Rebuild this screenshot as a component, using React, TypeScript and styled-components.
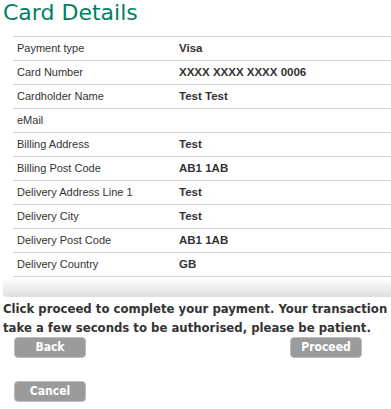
import React from "react";
import styled, { createGlobalStyle } from "styled-components";

const Global = createGlobalStyle`
  html, body { margin: 0; padding: 0; background: #ffffff; }
  body { overflow: hidden; }
`;

const Page = styled.div`
  width: 391px;
  padding: 0 0 0 3px;
  box-sizing: border-box;
  overflow: hidden;
`;

const Title = styled.h1`
  margin: 0;
  font-family: Verdana, "DejaVu Sans", sans-serif;
  font-weight: normal;
  font-size: 22px;
  line-height: 26px;
  color: #007f66;
`;

const Table = styled.div`
  margin: 10px 0 0 10px;
  border-top: 1px solid #d3d3d3;
  width: 400px;
`;

const Row = styled.div`
  display: grid;
  grid-template-columns: 166px 1fr;
  height: 23px;
  line-height: 22px;
  border-bottom: 1px solid #d3d3d3;
  font-family: Arial, "Liberation Sans", sans-serif;
  font-size: 11px;
  color: #333333;
`;

const Label = styled.div`
  padding-left: 4px;
`;

const Value = styled.div`
  font-weight: bold;
  font-size: 11.5px;
`;

const Footer = styled.div`
  height: 19px;
  margin-top: 1px;
  border-radius: 4px 0 0 4px;
  background: linear-gradient(to bottom, #ffffff 0%, #f2f2f2 40%, #dedede 100%);
`;

const Notice = styled.p`
  margin: 2px 0 0 0;
  font-family: Tahoma, "DejaVu Sans Condensed", "DejaVu Sans", sans-serif;
  font-weight: bold;
  font-size: 13px;
  line-height: 19px;
  color: #333333;
`;

const ButtonRow = styled.div`
  display: flex;
  justify-content: space-between;
  padding: 0 29px 0 11px;
`;

const CancelRow = styled.div`
  padding-left: 11px;
  margin-top: 23px;
`;

const Button = styled.button`
  width: 72px;
  height: 21px;
  padding: 0;
  border: 1px solid #bdbdbd;
  border-radius: 4px;
  background: #9b9b9b;
  color: #ffffff;
  font-family: Tahoma, "DejaVu Sans Condensed", "DejaVu Sans", sans-serif;
  font-weight: bold;
  font-size: 12px;
  line-height: 19px;
  cursor: pointer;
`;

const rows: [string, string][] = [
  ["Payment type", "Visa"],
  ["Card Number", "XXXX XXXX XXXX 0006"],
  ["Cardholder Name", "Test Test"],
  ["eMail", ""],
  ["Billing Address", "Test"],
  ["Billing Post Code", "AB1 1AB"],
  ["Delivery Address Line 1", "Test"],
  ["Delivery City", "Test"],
  ["Delivery Post Code", "AB1 1AB"],
  ["Delivery Country", "GB"],
];

export default function App() {
  return (
    <>
      <Global />
      <Page>
        <Title>Card Details</Title>
        <Table>
          {rows.map(([l, v]) => (
            <Row key={l}>
              <Label>{l}</Label>
              <Value>{v}</Value>
            </Row>
          ))}
        </Table>
        <Footer />
        <Notice>
          Click proceed to complete your payment. Your transaction take a few
          seconds to be authorised, please be patient.
        </Notice>
        <ButtonRow>
          <Button>Back</Button>
          <Button>Proceed</Button>
        </ButtonRow>
        <CancelRow>
          <Button>Cancel</Button>
        </CancelRow>
      </Page>
    </>
  );
}
